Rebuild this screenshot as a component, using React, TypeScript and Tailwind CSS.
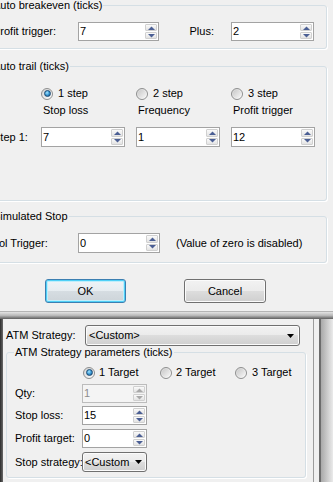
import React from "react";

function Arrow({ dir, disabled }: { dir: "up" | "down"; disabled?: boolean }) {
  const fill = disabled ? "#a9a9a9" : "#4b5f94";
  return (
    <svg width="7" height="4" viewBox="0 0 7 4" className="block">
      {dir === "up" ? (
        <path d="M0 4 L3.5 0.5 L7 4 Z" fill={fill} />
      ) : (
        <path d="M0 0 L3.5 3.5 L7 0 Z" fill={fill} />
      )}
    </svg>
  );
}

function Spin({
  value,
  className,
  disabled,
}: {
  value: string;
  className: string;
  disabled?: boolean;
}) {
  return (
    <div
      className={`flex shrink-0 border ${
        disabled
          ? "border-[#bcbcbc] bg-[#f4f4f4] text-[#8d8d8d]"
          : "border-[#a3a3a3] bg-white text-black"
      } ${className}`}
    >
      <div className="flex flex-1 items-center pl-[1px] pb-[1px] leading-[14px]">{value}</div>
      <div className="flex w-[13px] flex-col gap-[1px] py-[1px] pr-[1px]">
        <div className="flex flex-1 items-center justify-center rounded-[1px] border border-[#d0d0d0] bg-linear-to-b from-[#fafafa] to-[#e3e3e3]">
          <Arrow dir="up" disabled={disabled} />
        </div>
        <div className="flex flex-1 items-center justify-center rounded-[1px] border border-[#d0d0d0] bg-linear-to-b from-[#fafafa] to-[#e3e3e3]">
          <Arrow dir="down" disabled={disabled} />
        </div>
      </div>
    </div>
  );
}

function Radio({ checked }: { checked?: boolean }) {
  return (
    <span className="flex h-[12px] w-[12px] shrink-0 items-center justify-center rounded-full border border-[#8e8f8f] bg-linear-to-br from-[#d4d4d4] to-[#ffffff]">
      {checked ? (
        <span className="h-[7px] w-[7px] rounded-full border border-[#1b4a73] bg-radial-[at_40%_35%] from-[#a8e6ff] via-[#3a9ad6] to-[#134a7c]" />
      ) : (
        <span className="h-[8px] w-[8px] rounded-full bg-linear-to-br from-[#c9c9c9] to-[#f6f6f6]" />
      )}
    </span>
  );
}

function DropArrow() {
  return (
    <svg width="7" height="4" viewBox="0 0 7 4" className="block">
      <path d="M0 0 L3.5 4 L7 0 Z" fill="#000" />
    </svg>
  );
}

export default function App() {
  return (
    <div className="h-[482px] w-[333px] overflow-hidden bg-[#f0f0f0] font-['Liberation_Sans',Arial,sans-serif] text-[11px] text-black">
      {/* Top dialog */}
      <div className="h-[312px] border-b border-[#b4b4b4]">
        <fieldset className="ml-[-14px] w-[341px] rounded-[3px] border border-[#d5dfe5] pt-[11px] pb-[7px] shadow-[1px_1px_0_#ffffff]">
          <legend className="ml-[5px] px-[1px] leading-[11px]">Auto breakeven (ticks)</legend>
          <div className="flex items-center">
            <span className="ml-[6px] w-[85px] whitespace-nowrap">Profit trigger:</span>
            <Spin value="7" className="h-[19px] w-[81px]" />
            <span className="w-[72px] pr-[17px] text-right">Plus:</span>
            <Spin value="2" className="h-[19px] w-[83px]" />
          </div>
        </fieldset>

        <fieldset className="ml-[-14px] mt-[12px] w-[341px] rounded-[3px] border border-[#d5dfe5] pt-[15px] pb-[53px] shadow-[1px_1px_0_#ffffff]">
          <legend className="ml-[5px] px-[1px] leading-[11px]">Auto trail (ticks)</legend>
          <div className="flex h-[13px] items-center leading-[13px]">
            <span className="w-[54px]" />
            <span className="flex w-[95px] items-center gap-[5px]">
              <Radio checked />
              <span>1 step</span>
            </span>
            <span className="flex w-[95px] items-center gap-[5px]">
              <Radio />
              <span>2 step</span>
            </span>
            <span className="flex w-[95px] items-center gap-[5px]">
              <Radio />
              <span>3 step</span>
            </span>
          </div>
          <div className="mt-[4px] flex h-[13px] leading-[13px]">
            <span className="w-[54px]" />
            <span className="w-[95px] pl-[2px]">Stop loss</span>
            <span className="w-[95px] pl-[2px]">Frequency</span>
            <span className="w-[95px] pl-[2px]">Profit trigger</span>
          </div>
          <div className="mt-[10px] flex items-center">
            <span className="w-[54px] pl-[6px] whitespace-nowrap">Step 1:</span>
            <span className="w-[95px]">
              <Spin value="7" className="h-[20px] w-[84px]" />
            </span>
            <span className="w-[95px]">
              <Spin value="1" className="h-[20px] w-[84px]" />
            </span>
            <span className="w-[95px]">
              <Spin value="12" className="h-[20px] w-[84px]" />
            </span>
          </div>
        </fieldset>

        <fieldset className="ml-[-14px] mt-[10px] w-[341px] rounded-[3px] border border-[#d5dfe5] pt-[11px] pb-[9px] shadow-[1px_1px_0_#ffffff]">
          <legend className="ml-[5px] px-[1px] leading-[11px]">Simulated Stop</legend>
          <div className="flex items-center">
            <span className="ml-[-15px] w-[106px] shrink-0 whitespace-nowrap">Control Trigger:</span>
            <Spin value="0" className="h-[20px] w-[82px]" />
            <span className="ml-[16px] whitespace-nowrap">(Value of zero is disabled)</span>
          </div>
        </fieldset>

        <div className="mt-[16px] flex">
          <button className="ml-[45px] flex h-[24px] w-[81px] items-center justify-center rounded-[3px] border border-[#3c7fb1] bg-[linear-gradient(#eef4f8,#e6ecf0_50%,#d6dde2_50%,#cdd4d9)] shadow-[inset_0_0_0_1px_#4fd0f7,inset_0_0_0_2px_#bfeefb]">
            OK
          </button>
          <button className="ml-[58px] flex h-[24px] w-[82px] items-center justify-center rounded-[3px] border border-[#707070] bg-[linear-gradient(#f2f2f2,#ebebeb_50%,#dddddd_50%,#cfcfcf)] shadow-[inset_0_0_0_1px_#fbfbfb]">
            Cancel
          </button>
        </div>
      </div>

      {/* shadow strip between windows */}
      <div className="h-[7px] bg-linear-to-b from-[#e4e4e4] via-[#b8b8b8] to-[#5e5e5e]" />

      {/* Lower panel */}
      <div className="flex h-[163px]">
        <div className="w-[3px] bg-linear-to-r from-[#2c2c2c] to-[#6a6a6a]" />
        <div className="w-[311px] border-r border-[#9c9c9c] pt-[6px]">
          <div className="flex items-center">
            <span className="w-[82px] pl-[3px] whitespace-nowrap">ATM Strategy:</span>
            <div className="flex h-[21px] w-[215px] items-center justify-between rounded-[3px] border border-[#707070] bg-[linear-gradient(#f2f2f2,#ebebeb_50%,#dddddd_50%,#cfcfcf)] pl-[3px] pr-[5px] shadow-[inset_0_0_0_1px_#fbfbfb]">
              <span>&lt;Custom&gt;</span>
              <DropArrow />
            </div>
          </div>
          <fieldset className="ml-[3px] mt-[1px] w-[300px] rounded-[3px] border border-[#d5dfe5] pt-[8px] pb-[5px] shadow-[1px_1px_0_#ffffff]">
            <legend className="ml-[7px] px-[1px] leading-[11px]">ATM Strategy parameters (ticks)</legend>
            <div className="flex h-[13px] items-center leading-[13px]">
              <span className="ml-[76px] flex w-[77px] items-center gap-[4px]">
                <Radio checked />
                <span>1 Target</span>
              </span>
              <span className="flex w-[75px] items-center gap-[4px]">
                <Radio />
                <span>2 Target</span>
              </span>
              <span className="flex items-center gap-[5px]">
                <Radio />
                <span>3 Target</span>
              </span>
            </div>
            <div className="mt-[5px] flex items-center">
              <span className="ml-[8px] w-[67px] whitespace-nowrap">Qty:</span>
              <Spin value="1" disabled className="h-[19px] w-[65px]" />
            </div>
            <div className="mt-[3px] flex items-center">
              <span className="ml-[8px] w-[67px] whitespace-nowrap">Stop loss:</span>
              <Spin value="15" className="h-[19px] w-[65px]" />
            </div>
            <div className="mt-[4px] flex items-center">
              <span className="ml-[8px] w-[67px] whitespace-nowrap">Profit target:</span>
              <Spin value="0" className="h-[19px] w-[65px]" />
            </div>
            <div className="mt-[4px] flex items-center">
              <span className="ml-[8px] w-[67px] whitespace-nowrap">Stop strategy:</span>
              <div className="flex h-[20px] w-[65px] items-center justify-between rounded-[3px] border border-[#707070] bg-[linear-gradient(#f2f2f2,#ebebeb_50%,#dddddd_50%,#cfcfcf)] pl-[2px] pr-[4px] shadow-[inset_0_0_0_1px_#fbfbfb]">
                <span className="whitespace-nowrap">&lt;Custom</span>
                <DropArrow />
              </div>
            </div>
          </fieldset>
        </div>
        <div className="w-[5px]" />
        <div className="w-[2px] bg-[#6c6c6c]" />
        <div className="flex-1 bg-linear-to-r from-[#a9a9a9] to-[#ebebeb]" />
      </div>
    </div>
  );
}
